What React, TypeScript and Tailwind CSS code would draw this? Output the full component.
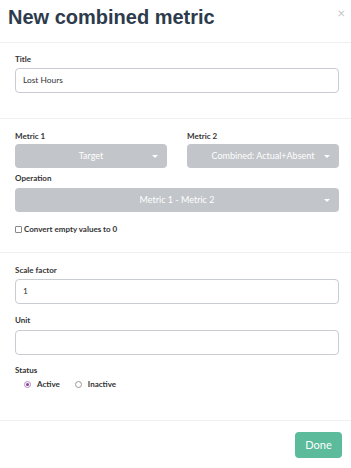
export default function App() {
  const label = "block text-[8px] leading-[11px] font-bold text-[#333]"
  const input =
    "w-full h-[25px] rounded-[4px] border border-[#c8cbcf] bg-white px-[7px] text-[8.4px] text-[#333] flex items-center"
  const select =
    "relative h-[24px] rounded-[4px] bg-[#c2c5c9] flex items-center justify-center text-[9px] text-white"
  const caret = (
    <span className="absolute right-[9px] top-[11px] w-0 h-0 border-l-[3px] border-r-[3px] border-t-[3px] border-l-transparent border-r-transparent border-t-white" />
  )

  return (
    <div className="w-[351px] h-[468px] overflow-hidden bg-white font-['Lato',sans-serif] text-[#333]">
      <div className="relative h-[43px] border-b border-[#f0f0f0] px-[8px] pt-[5px]">
        <h1 className="font-['Liberation_Sans',Arial,sans-serif] font-bold text-[20px] leading-[24px] text-[#2d3b4c]">
          New combined metric
        </h1>
        <span className="absolute right-[6px] top-[4px] text-[13px] text-[#c4c4c4]">×</span>
      </div>

      <div className="pl-[15px] pr-[12px] pt-[11px] pb-[25px] border-b border-[#f0f0f0]">
        <label className={label + " mb-[3px]"}>Title</label>
        <div className={input}>Lost Hours</div>
      </div>

      <div className="pl-[15px] pr-[12px] pt-[12px] pb-[17px] border-b border-[#f0f0f0]">
        <div className="grid grid-cols-2 gap-[20px]">
          <div>
            <label className={label + " mb-[2px]"}>Metric 1</label>
            <div className={select}>
              Target
              {caret}
            </div>
          </div>
          <div>
            <label className={label + " mb-[2px]"}>Metric 2</label>
            <div className={select}>
              Combined: Actual+Absent
              {caret}
            </div>
          </div>
        </div>
        <label className={label + " mt-[5px] mb-[4px]"}>Operation</label>
        <div className={select}>
          Metric 1 - Metric 2
          {caret}
        </div>
        <div className="flex items-center gap-[2px] mt-[12px] text-[8px] leading-[11px] font-bold">
          <span className="w-[7px] h-[7px] border border-[#888] rounded-[1px] bg-white" />
          <span>Convert empty values to 0</span>
        </div>
      </div>

      <div className="pl-[15px] pr-[12px] pt-[12px] pb-[30px] border-b border-[#f0f0f0]">
        <label className={label + " mb-[3px]"}>Scale factor</label>
        <div className={input}>1</div>
        <label className={label + " mt-[11px] mb-[4px]"}>Unit</label>
        <div className={input}></div>
        <label className={label + " mt-[10px]"}>Status</label>
        <div className="flex items-center text-[8px] leading-[11px] font-bold pl-[9px] mt-[3px]">
          <span className="w-[7px] h-[7px] rounded-full border border-[#b58bbf] flex items-center justify-center">
            <span className="w-[3px] h-[3px] rounded-full bg-[#8e3a9d]" />
          </span>
          <span className="ml-[6px]">Active</span>
          <span className="ml-[15px] w-[7px] h-[7px] rounded-full border border-[#999] bg-white" />
          <span className="ml-[6px]">Inactive</span>
        </div>
      </div>

      <div className="flex justify-end px-[9px] pt-[11px]">
        <button className="w-[47px] h-[26px] rounded-[4px] bg-[#5bbb9b] text-white text-[11px]">
          Done
        </button>
      </div>
    </div>
  )
}
